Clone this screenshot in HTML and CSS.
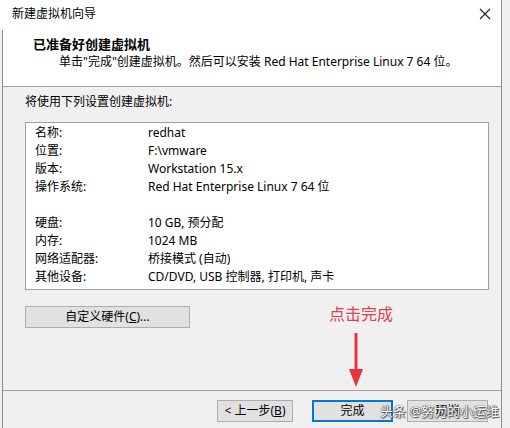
FILE: index.html
```html
<!DOCTYPE html>
<html lang="zh-CN">
<head>
  <meta charset="UTF-8">
  <meta name="viewport" content="width=device-width, initial-scale=1.0">
  <title>新建虚拟机向导</title>
  <link rel="stylesheet" href="styles.css">
</head>
<body>
  <div class="window">
    <div class="titlebar">
      <span class="title">新建虚拟机向导</span>
      <svg class="close" width="12" height="12" viewBox="0 0 12 12">
        <path d="M1 1 L11 11 M11 1 L1 11" stroke="#222" stroke-width="1.1" fill="none"/>
      </svg>
    </div>

    <div class="frame">
      <header class="header">
        <h1>已准备好创建虚拟机</h1>
        <p>单击"完成"创建虚拟机。然后可以安装 Red Hat Enterprise Linux 7 64 位。</p>
      </header>

      <main class="content">
        <p class="intro">将使用下列设置创建虚拟机:</p>
        <div class="summary">
          <div class="row"><span class="key">名称:</span><span>redhat</span></div>
          <div class="row"><span class="key">位置:</span><span>F:\vmware</span></div>
          <div class="row"><span class="key">版本:</span><span>Workstation 15.x</span></div>
          <div class="row"><span class="key">操作系统:</span><span>Red Hat Enterprise Linux 7 64 位</span></div>
          <div class="row"></div>
          <div class="row"><span class="key">硬盘:</span><span>10 GB, 预分配</span></div>
          <div class="row"><span class="key">内存:</span><span>1024 MB</span></div>
          <div class="row"><span class="key">网络适配器:</span><span>桥接模式 (自动)</span></div>
          <div class="row"><span class="key">其他设备:</span><span>CD/DVD, USB 控制器, 打印机, 声卡</span></div>
        </div>
        <button class="btn btn-hw">自定义硬件(<u>C</u>)...</button>

        <!-- annotation -->
        <span class="note">点击完成</span>
        <svg class="arrow" width="16" height="56" viewBox="0 0 16 56">
          <path d="M8 0 L8 38" stroke="#e8323c" stroke-width="3" fill="none"/>
          <path d="M1 36 L15 36 L8 54 Z" fill="#e8323c"/>
        </svg>
      </main>

      <footer class="footer">
        <button class="btn btn-back">&lt; 上一步(<u>B</u>)</button>
        <button class="btn btn-finish">完成</button>
        <button class="btn btn-cancel">取消</button>
        <span class="watermark">头条 @努力的小运维</span>
      </footer>
    </div>
  </div>
</body>
</html>
```

FILE: styles.css
```css
*, *::before, *::after {
  margin: 0;
  padding: 0;
  box-sizing: border-box;
}

body {
  font-family: "Noto Sans", "Noto Sans CJK SC", sans-serif;
  font-size: 12px;
  color: #000;
  background: #f0f0f0;
  width: 510px;
  height: 428px;
  overflow: hidden;
}

.window {
  width: 502px;
  height: 428px;
  border-right: 1px solid #8a8a8a;
  background: #f0f0f0;
}

.titlebar {
  height: 30px;
  background: #fff;
  display: flex;
  align-items: center;
  justify-content: space-between;
  padding: 0 10px 2px 12px;
}

.title {
  line-height: 18px;
}

.frame {
  margin-left: 2px;
  border-left: 1px solid #8a8a8a;
  height: 398px;
  display: flex;
  flex-direction: column;
}

.header {
  background: #fff;
  height: 57px;
  padding: 5px 0 0 30px;
  border-bottom: 1px solid #a0a0a0;
}

.header h1 {
  font-size: 13px;
  line-height: 18px;
  font-weight: bold;
}

.header p {
  line-height: 18px;
  padding-left: 26px;
}

.content {
  position: relative;
  height: 304px;
  padding: 6px 0 0 22px;
  border-bottom: 1px solid #a0a0a0;
}

.intro {
  line-height: 18px;
  margin-bottom: 11px;
}

.summary {
  width: 464px;
  height: 168px;
  background: #fff;
  border: 1px solid #a0a0a0;
  padding: 1px 0 0 9px;
}

.row {
  display: flex;
  height: 18px;
  line-height: 18px;
}

.key {
  width: 113px;
}

.btn {
  font-family: inherit;
  font-size: 12px;
  background: #e1e1e1;
  border: 1px solid #adadad;
  color: #000;
  height: 22px;
  line-height: 18px;
}

.btn-hw {
  margin-top: 16px;
  width: 165px;
}

.note {
  position: absolute;
  left: 326px;
  top: 217px;
  font-size: 16px;
  line-height: 20px;
  color: #e0404f;
}

.arrow {
  position: absolute;
  left: 345px;
  top: 246px;
}

.footer {
  position: relative;
  flex: 1;
  display: flex;
  align-items: flex-start;
  padding: 9px 13px 0 0;
  justify-content: flex-end;
}

.btn-back {
  width: 76px;
  margin-right: 19px;
}

.btn-finish {
  width: 81px;
  border: 2px solid #0078d7;
  margin-right: 14px;
}

.btn-cancel {
  width: 81px;
}

.watermark {
  position: absolute;
  left: 377px;
  top: 10px;
  white-space: nowrap;
  font-size: 13px;
  line-height: 20px;
  color: #fff;
  text-shadow: 0 0 1px #333, 0 0 1px #333, 1px 1px 1px #555;
}
```
